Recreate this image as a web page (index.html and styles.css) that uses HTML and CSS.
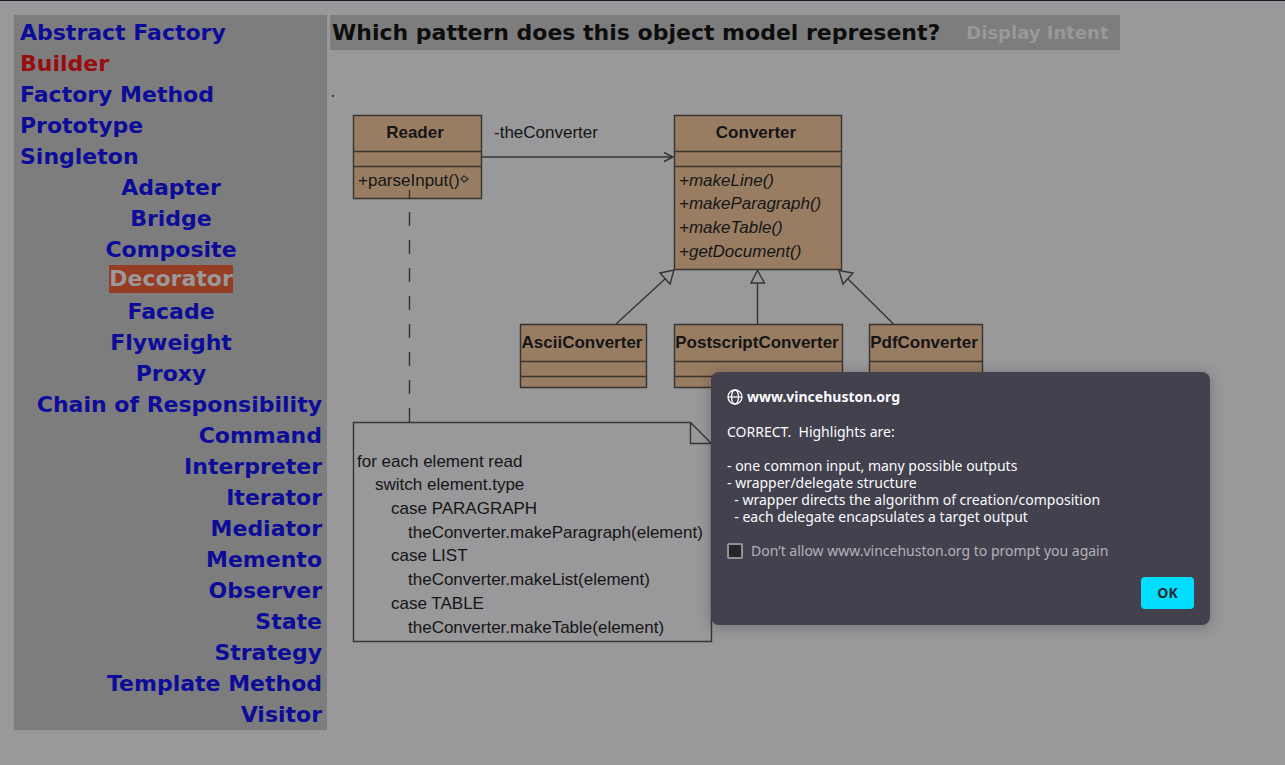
FILE: index.html
```html
<!DOCTYPE html>
<html lang="en">
<head>
<meta charset="utf-8">
<meta name="viewport" content="width=device-width, initial-scale=1">
<title>Design Patterns Quiz</title>
<link rel="stylesheet" href="styles.css">
</head>
<body>
<div class="page">
  <nav class="patterns" aria-label="Patterns">
    <ul class="group creational">
      <li><a href="#">Abstract Factory</a></li>
      <li><a href="#" class="answer">Builder</a></li>
      <li><a href="#">Factory Method</a></li>
      <li><a href="#">Prototype</a></li>
      <li><a href="#">Singleton</a></li>
    </ul>
    <ul class="group structural">
      <li><a href="#">Adapter</a></li>
      <li><a href="#">Bridge</a></li>
      <li><a href="#">Composite</a></li>
      <li><a href="#" class="selected">Decorator</a></li>
      <li><a href="#">Facade</a></li>
      <li><a href="#">Flyweight</a></li>
      <li><a href="#">Proxy</a></li>
    </ul>
    <ul class="group behavioral">
      <li><a href="#">Chain of Responsibility</a></li>
      <li><a href="#">Command</a></li>
      <li><a href="#">Interpreter</a></li>
      <li><a href="#">Iterator</a></li>
      <li><a href="#">Mediator</a></li>
      <li><a href="#">Memento</a></li>
      <li><a href="#">Observer</a></li>
      <li><a href="#">State</a></li>
      <li><a href="#">Strategy</a></li>
      <li><a href="#">Template Method</a></li>
      <li><a href="#">Visitor</a></li>
    </ul>
  </nav>
  <main class="question">
    <header class="bar">
      <h1>Which pattern does this object model represent?</h1>
      <a href="#" class="intent">Display Intent</a>
    </header>
    <svg class="diagram" width="660" height="600" viewBox="330 50 660 600" role="img" aria-label="Object model">
      <g class="specks">
        <rect x="332" y="95" width="2" height="2" fill="#1d4a20"/>
        <path d="M334 96l3 2M336 97h2M335 100h2M338 98l2 2M333 99l1 2" stroke="#a39fa4"/>
        <path d="M339 103h2M340 96h1" stroke="#92a092"/>
      </g>
      <g class="box">
        <path d="M353.500 115.500h128v83h-128z"/>
        <path d="M353.500 151.500h128M353.500 166.500h128"/>
        <path d="M674.500 115.500h167v154h-167z"/>
        <path d="M674.500 151.500h167M674.500 166.500h167"/>
        <path d="M520.500 324.500h126v63h-126z"/>
        <path d="M520.500 361.500h126M520.500 376.500h126"/>
        <path d="M674.500 324.500h168v63h-168z"/>
        <path d="M674.500 361.500h168M674.500 376.500h168"/>
        <path d="M869.500 324.500h113v63h-113z"/>
        <path d="M869.500 361.500h113M869.500 376.500h113"/>
      </g>
      <g class="line">
        <path d="M482 157H673M664 152.500l9 4.500l-9 4.500"/>
        <path d="M409.500 190v9M409.500 212v14M409.500 240v14M409.500 268v14M409.500 296v14M409.500 324v14M409.500 352v14M409.500 380v14M409.500 408v14"/>
        <path d="M616 324L665 279M660 273L674 270L670 284Z"/>
        <path d="M757.500 324V283M757.500 270.500L764.500 283H751Z"/>
        <path d="M893.500 324L848 279M839 270.500L853 273L843 284Z"/>
        <path d="M353.500 422.500H690.500L711.500 443.500V641.500H353.500ZM690.500 422.500V443.500H711.500"/>
        <path d="M464 176l4 3l-4 3l-3-3z"/>
      </g>
      <g class="name">
        <text x="415" y="138">Reader</text>
        <text x="756" y="138">Converter</text>
        <text x="582" y="348">AsciiConverter</text>
        <text x="757" y="348">PostscriptConverter</text>
        <text x="924" y="348">PdfConverter</text>
      </g>
      <g class="label">
        <text x="494" y="138">-theConverter</text>
        <text x="358" y="186">+parseInput()</text>
        <text x="357" y="467">for each element read</text>
        <text x="375" y="490">switch element.type</text>
        <text x="391" y="514">case PARAGRAPH</text>
        <text x="408" y="538">theConverter.makeParagraph(element)</text>
        <text x="391" y="561">case LIST</text>
        <text x="408" y="585">theConverter.makeList(element)</text>
        <text x="391" y="609">case TABLE</text>
        <text x="408" y="633">theConverter.makeTable(element)</text>
      </g>
      <g class="label abstract">
        <text x="679" y="186">+makeLine()</text>
        <text x="679" y="209">+makeParagraph()</text>
        <text x="679" y="233">+makeTable()</text>
        <text x="679" y="257">+getDocument()</text>
      </g>
    </svg>
  </main>
</div>
<div class="dialog" role="alertdialog" aria-labelledby="dialog-site" aria-describedby="dialog-text">
  <div class="site">
    <svg class="globe" width="16" height="16" viewBox="0 0 16 16" aria-hidden="true">
      <circle cx="8" cy="8" r="7"/>
      <ellipse cx="8" cy="8" rx="3.500" ry="7"/>
      <path d="M1 8h14"/>
    </svg>
    <strong id="dialog-site">www.vincehuston.org</strong>
  </div>
  <p class="message" id="dialog-text">CORRECT.  Highlights are:

- one common input, many possible outputs
- wrapper/delegate structure
  - wrapper directs the algorithm of creation/composition
  - each delegate encapsulates a target output</p>
  <label class="again"><input type="checkbox">Don’t allow www.vincehuston.org to prompt you again</label>
  <button type="button" class="ok">OK</button>
</div>
</body>
</html>
```
FILE: styles.css
```css
* {
  box-sizing: border-box;
}

body {
  margin: 0;
  min-height: 100vh;
  border-top: 1px solid #1c1b22;
  background: #99989a;
  color: #0d0d0e;
  font-family: "DejaVu Sans", Verdana, sans-serif;
}

a {
  color: inherit;
  text-decoration: none;
}

.page {
  display: flex;
  align-items: flex-start;
  gap: 3px;
  padding: 14px 14px 0;
}

.patterns {
  flex: none;
  padding: 2px 5px 0 6px;
  background: #7d7d7e;
  color: #0d0c99;
  font-size: 22px;
  font-weight: bold;
  line-height: 31px;
}

.group {
  width: 302px;
  margin: 0;
  padding: 0;
  list-style: none;
}

.structural {
  text-align: center;
}

.behavioral {
  text-align: right;
}

.answer {
  color: #990c10;
}

.selected {
  display: inline-block;
  background: #963c22;
  color: #99989a;
  line-height: 28px;
  vertical-align: top;
}

.question {
  flex: 1;
  min-width: 0;
}

.bar {
  display: flex;
  align-items: center;
  gap: 26px;
  width: fit-content;
  padding: 0 12px 0 2px;
  background: #7d7d7e;
  line-height: 35px;
}

h1 {
  margin: 0;
  font-size: 22px;
}

.intent {
  color: #99989a;
  font-size: 18px;
  font-weight: bold;
}

.diagram {
  display: block;
  max-width: 100%;
  font-family: "Liberation Sans", Arial, sans-serif;
  font-size: 17px;
  fill: #151516;
}

.box path {
  fill: #997d62;
  stroke: #38342f;
  stroke-width: 1.4;
}

.line path {
  fill: none;
  stroke: #353536;
  stroke-width: 1.4;
}

.specks path {
  fill: none;
}

.name {
  font-weight: bold;
  text-anchor: middle;
}

.abstract {
  font-style: italic;
}

.dialog {
  position: absolute;
  top: 372px;
  left: 711px;
  display: flex;
  flex-direction: column;
  width: 499px;
  padding: 16px;
  border-radius: 8px;
  background: #42414d;
  box-shadow: 0 2px 14px rgba(20, 20, 25, 0.3);
  color: #fbfbfe;
  font-family: "Noto Sans", Ubuntu, sans-serif;
  font-size: 14px;
  line-height: 17px;
}

.site {
  display: flex;
  align-items: center;
  gap: 4px;
}

.globe {
  fill: none;
  stroke: #fbfbfe;
  stroke-width: 1.3;
}

.message {
  margin: 18px 0 0;
  white-space: pre-wrap;
}

.again {
  display: flex;
  align-items: center;
  gap: 8px;
  margin-top: 17px;
  color: #b3b2ba;
}

.again input {
  appearance: none;
  width: 16px;
  height: 16px;
  margin: 0;
  border: 2px solid #8f8f9d;
  border-radius: 2px;
  background: #252525;
}

.ok {
  align-self: flex-end;
  min-width: 53px;
  margin-top: 18px;
  padding: 7px 15px 8px;
  border: 0;
  border-radius: 4px;
  background: #00ddff;
  color: #2b2a33;
  font: inherit;
  font-weight: bold;
}
```
